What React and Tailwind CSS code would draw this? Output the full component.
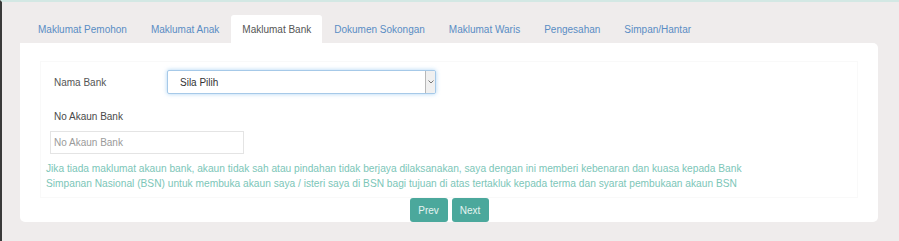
import React from "react";

const TABS = [
  "Maklumat Pemohon",
  "Maklumat Anak",
  "Maklumat Bank",
  "Dokumen Sokongan",
  "Maklumat Waris",
  "Pengesahan",
  "Simpan/Hantar",
];

function Tab({ label, active }) {
  return (
    <div
      className={
        active
          ? "h-[28px] px-[11px] flex items-center bg-white rounded-t-[3px] text-[#555] text-[10px]"
          : "h-[28px] px-[12px] flex items-center text-[#5a8dc4] text-[10px]"
      }
    >
      {label}
    </div>
  );
}

export default function App() {
  return (
    <div className="w-[899px] h-[241px] overflow-hidden bg-[#efecec] border-l-2 border-l-[#3a3a3a] border-t-2 border-t-[#d3e8e4] pl-[18px] pt-[13px] font-['Liberation_Sans',Arial,sans-serif]">
      <div className="flex h-[28px] ml-[6px]">
        {TABS.map((t) => (
          <Tab key={t} label={t} active={t === "Maklumat Bank"} />
        ))}
      </div>

      <div className="w-[858px] h-[179px] bg-white rounded-b-[5px] rounded-tr-[5px] pt-[18px] flex flex-col">
        <div className="mx-[20px] border border-[#f9f9f9] pb-[6px]">
          <div className="flex items-center mt-[8px] pl-[13px]">
            <label className="w-[113px] text-[10px] text-[#555]">Nama Bank</label>
            <div className="w-[269px] h-[24px] flex items-stretch border border-[#a6c9e8] rounded-[2px] shadow-[0_0_4px_rgba(102,175,233,0.55)] bg-white">
              <div className="flex-1 flex items-center pl-[12px] text-[10px] text-[#333]">
                Sila Pilih
              </div>
              <div className="w-[10px] flex items-center justify-center bg-[#f0f0f0] border-l border-[#b8b8b8] rounded-r-[2px]">
                <svg width="6" height="4" viewBox="0 0 6 4">
                  <path d="M0.5 0.5 L3 3 L5.5 0.5" fill="none" stroke="#777" strokeWidth="1" />
                </svg>
              </div>
            </div>
          </div>

          <div className="mt-[16px] pl-[13px] text-[10px] leading-[13px] text-[#4a4a4a]">
            No Akaun Bank
          </div>

          <div className="mt-[8px] pl-[9px]">
            <div className="w-[194px] h-[23px] border border-[#e4e4e4] flex items-center pl-[3px] text-[10px] text-[#9a9a9a]">
              No Akaun Bank
            </div>
          </div>

          <p className="mt-[7px] pl-[5px] text-[10.2px] leading-[15px] text-[#7cc6b8]">
            Jika tiada maklumat akaun bank, akaun tidak sah atau pindahan tidak berjaya dilaksanakan, saya dengan ini memberi kebenaran dan kuasa kepada Bank
            <br />
            Simpanan Nasional (BSN) untuk membuka akaun saya / isteri saya di BSN bagi tujuan di atas tertakluk kepada terma dan syarat pembukaan akaun BSN
          </p>
        </div>

        <div className="flex justify-center gap-[4px]">
          <button className="w-[38px] h-[24px] rounded-[3px] bg-[#4ba89c] text-[10px] text-[#e6f4f1]">
            Prev
          </button>
          <button className="w-[37px] h-[24px] rounded-[3px] bg-[#4ba89c] text-[10px] text-[#e6f4f1]">
            Next
          </button>
        </div>
      </div>
    </div>
  );
}
